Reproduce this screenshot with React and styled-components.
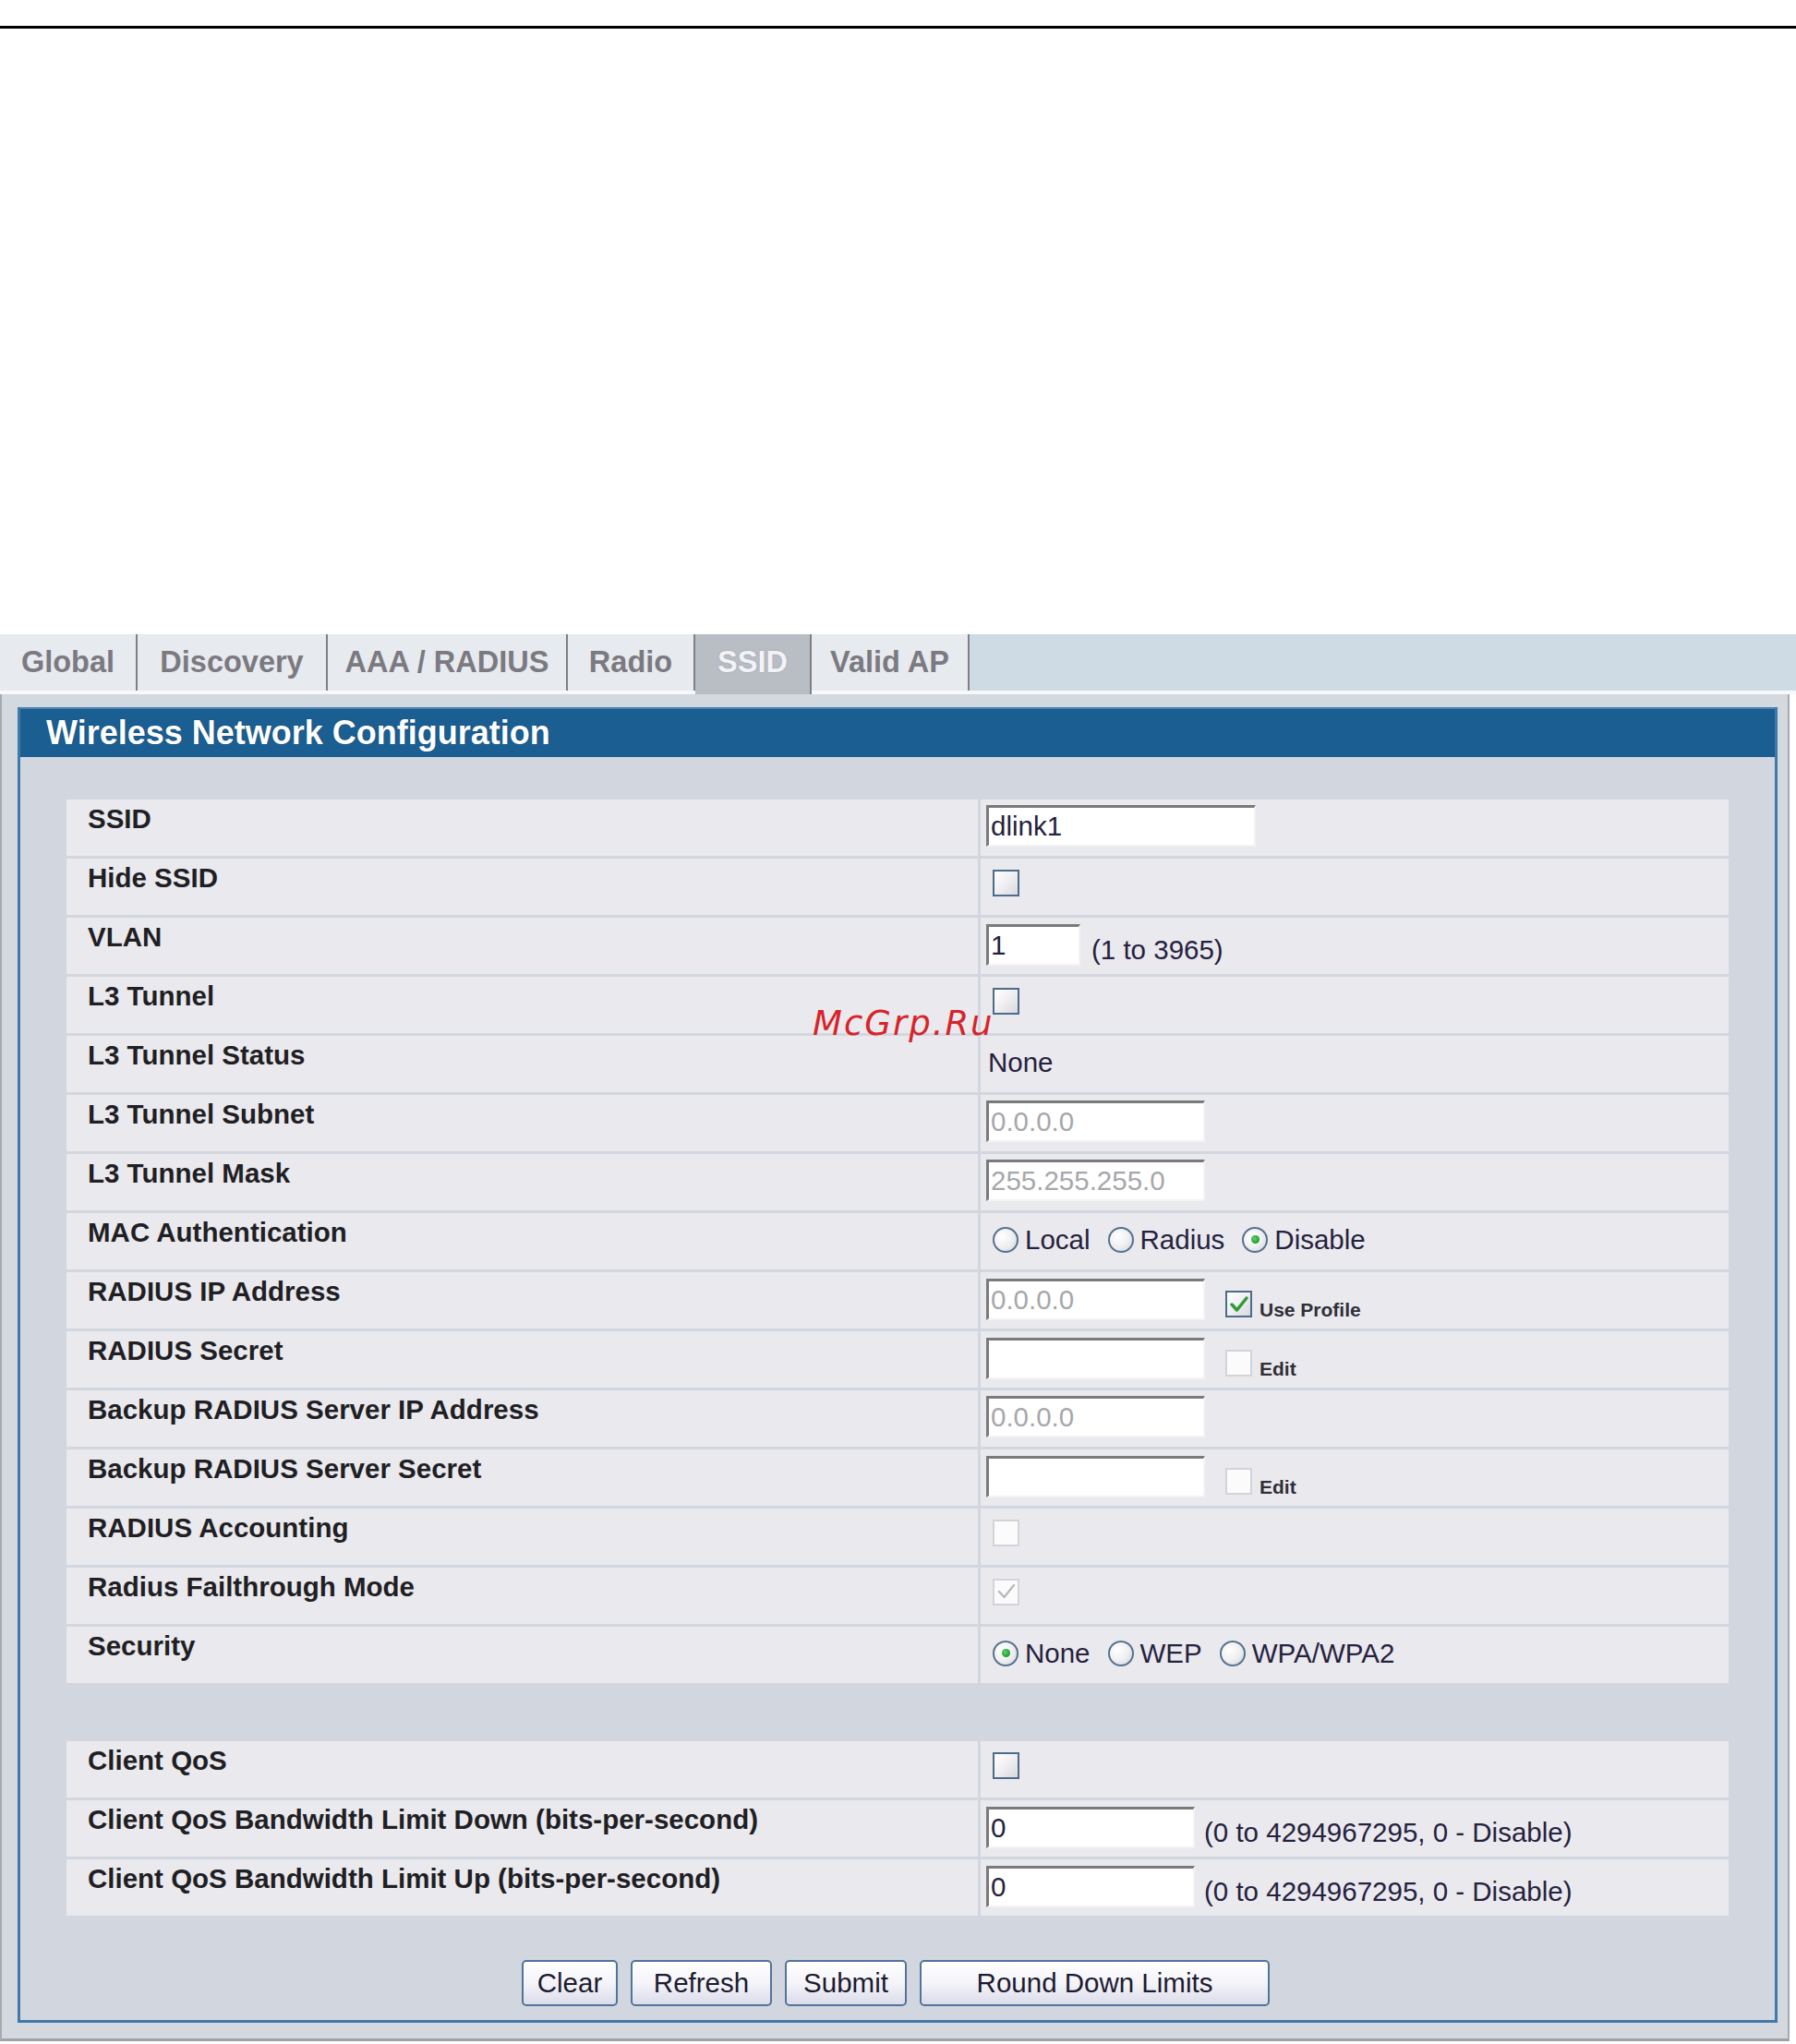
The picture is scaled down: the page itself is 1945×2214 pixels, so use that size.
import React from 'react';
import styled, { createGlobalStyle } from 'styled-components';

const GlobalStyle = createGlobalStyle`
  html, body { margin: 0; padding: 0; background: #fff; }
  body { font-family: "Liberation Sans", Arial, sans-serif; }
`;

const Page = styled.div`
  position: relative;
  width: 1945px;
  height: 2214px;
  overflow: hidden;
  background: #fff;
`;

const TopRule = styled.div`
  margin-top: 28px;
  height: 3px;
  background: #000;
`;

const TabBar = styled.div`
  display: flex;
  margin-top: 656px;
  height: 61px;
  background: #cedbe5;
  border-bottom: 4px solid #f7f8fa;
`;

const Tab = styled.div`
  box-sizing: border-box;
  display: flex;
  align-items: center;
  justify-content: center;
  width: ${(p) => p.$w}px;
  border-right: 2px solid #7f8084;
  background: ${(p) => (p.$active ? '#b9bdc4' : '#e7eaef')};
  margin-bottom: ${(p) => (p.$active ? '-4px' : '0')};
  padding-bottom: ${(p) => (p.$active ? '5px' : '1px')};
  color: ${(p) => (p.$active ? '#f1f3f6' : '#7b7a80')};
  font-size: 32.5px;
  font-weight: bold;
  text-shadow: ${(p) => (p.$active ? '0 0 2px #9a9ea6' : 'none')};
  white-space: nowrap;
`;

const Frame = styled.div`
  box-sizing: border-box;
  width: 1938px;
  padding: 14px 11px 17px 17px;
  background: #d4d9e0;
  border-left: 2px solid #a6aab0;
  border-right: 2px solid #a6aab0;
  border-bottom: 3px solid #9ea2a8;
`;

const Panel = styled.div`
  background: #d2d7df;
  border: 3px solid #3f7aab;
  border-top: none;
`;

const Header = styled.div`
  height: 54px;
  display: flex;
  align-items: center;
  padding-left: 28px;
  background: #1b5e91;
  border-top: 2px solid #4a84b3;
  box-sizing: border-box;
  color: #fff;
  font-size: 36px;
  font-weight: bold;
  text-shadow: 0 0 1px #0d3658;
`;

const Body = styled.div`
  padding: 46px 50px 15px 50px;
`;

const Grid = styled.div`
  display: grid;
  grid-template-columns: 987px 1fr;
  grid-auto-rows: 61px;
  gap: 3px;
  margin-top: ${(p) => p.$top || 0}px;
`;

const Label = styled.div`
  background: #eae9ee;
  padding: 4px 0 0 23px;
  font-size: 29.5px;
  font-weight: bold;
  color: #1f1f24;
  white-space: nowrap;
`;

const Value = styled.div`
  background: #eae9ee;
  display: flex;
  align-items: ${(p) => (p.$bottom ? 'flex-end' : 'center')};
  padding: ${(p) => (p.$bottom ? '0 0 9px 6px' : '0 0 4px 6px')};
  font-size: 29.5px;
  color: #25223e;
  white-space: nowrap;
`;

const TextInput = styled.input`
  box-sizing: border-box;
  width: ${(p) => p.$w}px;
  height: 45px;
  margin: 0;
  padding: 0 0 0 2px;
  background: #fff;
  border-top: 3px solid #7a7a7c;
  border-left: 3px solid #7a7a7c;
  border-right: 2px solid #f3f3f5;
  border-bottom: 2px solid #f3f3f5;
  font-family: "Liberation Sans", Arial, sans-serif;
  font-size: 29.5px;
  color: ${(p) => (p.disabled ? '#a7a7ab' : '#25223e')};
  -webkit-text-fill-color: ${(p) => (p.disabled ? '#a7a7ab' : '#25223e')};
  outline: none;
`;

const Note = styled.span`
  margin-left: ${(p) => p.$gap || 12}px;
  line-height: 34px;
`;

const Plain = styled.span`
  margin-left: 2px;
`;

const Box = styled.span`
  box-sizing: border-box;
  display: inline-flex;
  align-items: center;
  justify-content: center;
  width: 29px;
  height: 29px;
  margin-left: ${(p) => p.$ml ?? 7}px;
  margin-bottom: ${(p) => p.$mb || 0}px;
  border: 2px solid ${(p) => (p.$faint ? '#d2d4d9' : '#4d6c8c')};
  background: ${(p) =>
    p.$faint ? '#fbfbfc' : 'linear-gradient(135deg, #ffffff 0%, #f1f1f3 45%, #d9d9de 100%)'};
`;

const SmallText = styled.span`
  margin-left: 8px;
  font-size: 21px;
  font-weight: bold;
  color: #2f2f38;
  line-height: 22px;
`;

const RadioGroup = styled.div`
  display: flex;
  align-items: center;
  gap: 19px;
  margin-left: 7px;
`;

const RadioItem = styled.span`
  display: inline-flex;
  align-items: center;
  gap: 7px;
`;

const Circle = styled.span`
  box-sizing: border-box;
  display: inline-flex;
  align-items: center;
  justify-content: center;
  width: 28px;
  height: 28px;
  border-radius: 50%;
  border: 2px solid #56728f;
  background: radial-gradient(circle at 35% 35%, #ffffff 0%, #f0f0f2 50%, #d0d2d8 100%);
`;

const Dot = styled.span`
  width: 9px;
  height: 9px;
  border-radius: 50%;
  background: radial-gradient(circle at 40% 40%, #5fd36b 0%, #1f9a2e 70%);
`;

const ButtonRow = styled.div`
  display: flex;
  justify-content: center;
  gap: 14px;
  margin-top: 48px;
  padding-right: 4px;
`;

const Button = styled.button`
  box-sizing: border-box;
  width: ${(p) => p.$w}px;
  height: 50px;
  padding: 0;
  border: 2px solid #51739c;
  border-radius: 5px;
  background: linear-gradient(180deg, #ffffff 0%, #f4f4f9 50%, #dcdcea 100%);
  font-family: "Liberation Sans", Arial, sans-serif;
  font-size: 29.5px;
  color: #1d1b30;
`;

const Watermark = styled.div`
  position: absolute;
  left: 880px;
  top: 1090px;
  font-family: "DejaVu Sans", sans-serif;
  font-style: italic;
  font-size: 37px;
  line-height: 1;
  letter-spacing: 2px;
  color: #d8232a;
`;

function Check({ checked, faint, ml, mb }) {
  return (
    <Box $faint={faint} $ml={ml} $mb={mb}>
      {checked && (
        <svg width="20" height="18" viewBox="0 0 20 18">
          <path
            d="M2 9 L7.5 15 L18 2"
            fill="none"
            stroke={faint ? '#b9bbc0' : '#2f9c3a'}
            strokeWidth={faint ? 2.5 : 3.5}
            strokeLinecap="round"
            strokeLinejoin="round"
          />
        </svg>
      )}
    </Box>
  );
}

function Radios({ options, selected }) {
  return (
    <RadioGroup>
      {options.map((o) => (
        <RadioItem key={o}>
          <Circle>{o === selected && <Dot />}</Circle>
          {o}
        </RadioItem>
      ))}
    </RadioGroup>
  );
}

const tabs = [
  { name: 'Global', w: 149 },
  { name: 'Discovery', w: 206 },
  { name: 'AAA / RADIUS', w: 260 },
  { name: 'Radio', w: 138 },
  { name: 'SSID', w: 126, active: true },
  { name: 'Valid AP', w: 171 },
];

const mainRows = [
  { label: 'SSID', value: <TextInput $w={292} defaultValue="dlink1" readOnly /> },
  { label: 'Hide SSID', value: <Check mb={5} /> },
  {
    label: 'VLAN',
    bottom: true,
    value: (
      <>
        <TextInput $w={102} defaultValue="1" readOnly />
        <Note>(1 to 3965)</Note>
      </>
    ),
  },
  { label: 'L3 Tunnel', value: <Check mb={5} /> },
  { label: 'L3 Tunnel Status', value: <Plain>None</Plain> },
  { label: 'L3 Tunnel Subnet', value: <TextInput $w={237} defaultValue="0.0.0.0" disabled /> },
  { label: 'L3 Tunnel Mask', value: <TextInput $w={237} defaultValue="255.255.255.0" disabled /> },
  { label: 'MAC Authentication', value: <Radios options={['Local', 'Radius', 'Disable']} selected="Disable" /> },
  {
    label: 'RADIUS IP Address',
    bottom: true,
    value: (
      <>
        <TextInput $w={237} defaultValue="0.0.0.0" disabled />
        <Check checked ml={22} mb={3} />
        <SmallText>Use Profile</SmallText>
      </>
    ),
  },
  {
    label: 'RADIUS Secret',
    bottom: true,
    value: (
      <>
        <TextInput $w={237} defaultValue="" readOnly />
        <Check faint ml={22} mb={3} />
        <SmallText>Edit</SmallText>
      </>
    ),
  },
  { label: 'Backup RADIUS Server IP Address', value: <TextInput $w={237} defaultValue="0.0.0.0" disabled /> },
  {
    label: 'Backup RADIUS Server Secret',
    bottom: true,
    value: (
      <>
        <TextInput $w={237} defaultValue="" readOnly />
        <Check faint ml={22} mb={3} />
        <SmallText>Edit</SmallText>
      </>
    ),
  },
  { label: 'RADIUS Accounting', value: <Check faint mb={5} /> },
  { label: 'Radius Failthrough Mode', value: <Check faint checked mb={5} /> },
  { label: 'Security', value: <Radios options={['None', 'WEP', 'WPA/WPA2']} selected="None" /> },
];

const qosRows = [
  { label: 'Client QoS', value: <Check mb={5} /> },
  {
    label: 'Client QoS Bandwidth Limit Down (bits-per-second)',
    bottom: true,
    value: (
      <>
        <TextInput $w={226} defaultValue="0" readOnly />
        <Note $gap={10}>(0 to 4294967295, 0 - Disable)</Note>
      </>
    ),
  },
  {
    label: 'Client QoS Bandwidth Limit Up (bits-per-second)',
    bottom: true,
    value: (
      <>
        <TextInput $w={226} defaultValue="0" readOnly />
        <Note $gap={10}>(0 to 4294967295, 0 - Disable)</Note>
      </>
    ),
  },
];

function Rows({ rows, top }) {
  return (
    <Grid $top={top}>
      {rows.map((r) => (
        <React.Fragment key={r.label}>
          <Label>{r.label}</Label>
          <Value $bottom={r.bottom}>{r.value}</Value>
        </React.Fragment>
      ))}
    </Grid>
  );
}

export default function App() {
  return (
    <Page>
      <GlobalStyle />
      <TopRule />
      <TabBar>
        {tabs.map((t) => (
          <Tab key={t.name} $w={t.w} $active={t.active}>
            {t.name}
          </Tab>
        ))}
      </TabBar>
      <Frame>
        <Panel>
          <Header>Wireless Network Configuration</Header>
          <Body>
            <Rows rows={mainRows} />
            <Rows rows={qosRows} top={63} />
            <ButtonRow>
              <Button $w={104}>Clear</Button>
              <Button $w={153}>Refresh</Button>
              <Button $w={132}>Submit</Button>
              <Button $w={379}>Round Down Limits</Button>
            </ButtonRow>
          </Body>
        </Panel>
      </Frame>
      <Watermark>McGrp.Ru</Watermark>
    </Page>
  );
}
